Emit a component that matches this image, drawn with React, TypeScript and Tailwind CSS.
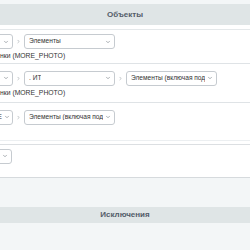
import { ChevronDown, ChevronRight } from 'lucide-react'

function Select({ w, text, className = '' }: { w: string; text?: string; className?: string }) {
  return (
    <div className={`${w} ${className} h-[15px] shrink-0 flex items-center justify-between bg-white border border-[#c6cbd0] rounded-[3px] pl-[4px] pr-[3px] overflow-hidden`}>
      <span className="text-[6.6px] leading-none text-[#333] whitespace-nowrap overflow-hidden">{text}</span>
      <ChevronDown className="w-[6px] h-[6px] text-[#7a8087] shrink-0 ml-[2px]" strokeWidth={2.5} />
    </div>
  )
}

function Arrow() {
  return <ChevronRight className="w-[5px] h-[5px] shrink-0 text-[#8a9096]" strokeWidth={2.5} />
}

function Prop() {
  return <div className="text-[6.8px] leading-none text-[#333] whitespace-nowrap mt-[4px]">нки (MORE_PHOTO)</div>
}

export default function App() {
  return (
    <div className="w-[250px] h-[250px] overflow-hidden bg-[#f3f6f7] pt-[4px]" style={{ fontFamily: '"Liberation Sans", Arial, sans-serif' }}>
      {/* Objects header */}
      <div className="h-[21px] bg-[#dfe5e6] flex items-center justify-center text-[8px] font-semibold text-[#535c69]">Объекты</div>

      <div className="bg-white pt-[4px]">
        <div className="border-t border-[#e4e8ea]" />

        {/* Row 1 */}
        <div className="pt-[4px] pb-[3px] border-b border-[#dfe3e6]">
          <div className="flex items-center ml-[-50px] gap-[3px]">
            <Select w="w-[63px]" />
            <Arrow />
            <Select w="w-[91px]" text="Элементы" />
          </div>
          <Prop />
        </div>

        {/* Row 2 */}
        <div className="pt-[7px] pb-[5px] border-b border-[#dfe3e6]">
          <div className="flex items-center ml-[-50px] gap-[3px]">
            <Select w="w-[63px]" />
            <Arrow />
            <Select w="w-[91px]" text=". ИТ" />
            <Arrow />
            <Select w="w-[91px]" text="Элементы (включая подр" />
          </div>
          <Prop />
        </div>

        {/* Row 3 */}
        <div className="pt-[7px] pb-[15px] border-b border-[#eceff1]">
          <div className="flex items-center ml-[-50px] gap-[3px]">
            <div className="w-[63px] h-[15px] shrink-0 flex items-center justify-end bg-white border border-[#c6cbd0] rounded-[3px] pr-[2px]">
              <span className="text-[6.6px] leading-none text-[#333] whitespace-nowrap mr-[2px]">E</span>
              <ChevronDown className="w-[6px] h-[6px] text-[#7a8087] shrink-0" strokeWidth={2.5} />
            </div>
            <Arrow />
            <Select w="w-[91px]" text="Элементы (включая подр" />
          </div>
        </div>
        <div className="h-[4px] border-b border-[#dcdfe2]" />

        {/* Row 4 */}
        <div className="pt-[4px] pb-[13px] border-b border-[#d6dadd]">
          <div className="flex items-center ml-[-50px]">
            <Select w="w-[62px]" />
          </div>
        </div>
      </div>

      <div className="h-[29px]" />

      {/* Exclusions header */}
      <div className="h-[16px] bg-[#dfe5e6] flex items-center justify-center text-[8px] font-semibold text-[#535c69]">Исключения</div>
    </div>
  )
}
